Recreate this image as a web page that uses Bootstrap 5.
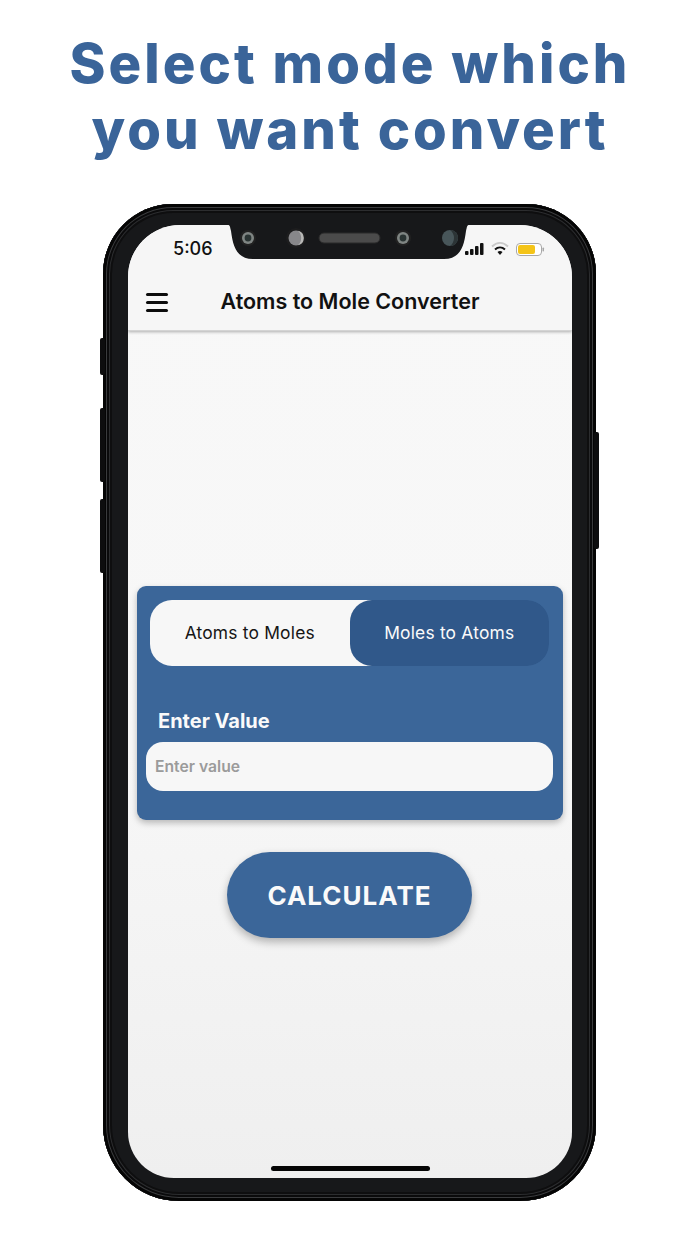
<!DOCTYPE html>
<html lang="en">
<head>
<meta charset="utf-8">
<title>Atoms to Mole Converter</title>
<link href="https://cdn.jsdelivr.net/npm/bootstrap@5.3.0/dist/css/bootstrap.min.css" rel="stylesheet">
<style>
html,body{margin:0;background:#fff;overflow:hidden}
body{width:700px;height:1244px;font-family:Inter,"Liberation Sans",sans-serif}
.promo-title{margin:0;padding-top:30px;height:204px;font-family:Inter,"Liberation Sans",sans-serif;font-weight:800;font-size:54.500px;line-height:66px;letter-spacing:3px;color:#3a6499;text-align:center}
.phone{position:relative;width:493px;height:997px;margin-left:103px;padding:21px 24px 23px 25px;border-radius:70px 70px 76px 76px;background:#17181a;box-shadow:inset 0 0 0 3px #050505,inset 0 0 0 4px #3a3b3d,inset 0 0 0 6px #0a0a0b,inset 0 0 0 7px #2c2d2f,inset 0 0 0 9px #0e0e0f}
.side-key{position:absolute;width:5px;background:#0d0d0e;border-radius:2px}
.k1{left:-3px;top:134px;height:37px}.k2{left:-3px;top:204px;height:74px}.k3{left:-3px;top:295px;height:74px}.k4{right:-3px;top:228px;height:117px}
.screen{position:relative;width:444px;height:953px;border-radius:52px 52px 46px 46px;overflow:hidden;background:linear-gradient(180deg,#f8f8f8 0%,#f7f7f7 55%,#efefef 100%)}
.notch-art{position:absolute;left:95px;top:0}
.clock{position:absolute;left:45px;top:13px;font-size:18px;line-height:22px;font-weight:500;color:#111}
.status-art{position:absolute;left:334px;top:15px}
.app-bar{height:106px;padding-top:61px;background:#f6f6f6;box-shadow:0 1px 3px rgba(0,0,0,.3);border-bottom:1px solid #d4d4d4}
.burger{position:absolute;left:18px;top:68px;width:22px;display:flex;flex-direction:column;gap:5px}
.burger i{display:block;height:3px;border-radius:2px;background:#0c0c0c}
.app-title{margin:0;font-size:21.500px;line-height:30px;font-weight:600;color:#111;text-align:center}
.panel{margin:255px 9px 0;height:234px;padding:14px 13px;border:0;border-radius:9px;background:#3b6699;box-shadow:0 3px 6px rgba(0,0,0,.25)}
.mode-switch{width:399px;height:66px;border-radius:22px;background:linear-gradient(90deg,#f7f7f7 60%,transparent 60%);overflow:hidden}
.mode-switch .btn{width:50%;border:0;border-radius:22px;font-size:17.400px;font-weight:400;color:#151515;padding:0;height:66px;letter-spacing:.2px}
.mode-switch .btn.is-on{background:#30588a;color:#fafafa}
.field-label{margin:41px 0 7px 8px;font-size:20px;line-height:28px;font-weight:700;color:#fafafa;display:block}
.value-input{display:block;margin-left:-4px;width:407px;height:49px;border:0;border-radius:17px;background:#f7f7f7;padding:0 9px 1px;font-size:15.700px;font-weight:600;font-family:Inter,"Liberation Sans",sans-serif}
.value-input::placeholder{color:#9b9b9b;opacity:1}
.calc-btn{display:block;width:245px;height:86px;margin:32px auto 0 99px;border:0;border-radius:43px;background:#3b6699;color:#fafafa;font-size:26px;font-weight:700;letter-spacing:1px;box-shadow:0 4px 8px rgba(0,0,0,.28)}
.calc-btn:hover{background:#3b6699;color:#fafafa}
.home-bar{position:absolute;left:143px;bottom:7px;width:159px;height:5px;border-radius:3px;background:#050505}
</style>
</head>
<body>
<h1 class="promo-title">Select mode which<br>you want convert</h1>
<div class="phone">
  <span class="side-key k1"></span><span class="side-key k2"></span><span class="side-key k3"></span><span class="side-key k4"></span>
  <div class="screen">
    <div class="app-bar">
      <p class="app-title">Atoms to Mole Converter</p>
    </div>
    <div class="burger"><i></i><i></i><i></i></div>
    <svg class="notch-art" width="254" height="36" viewBox="0 0 254 36">
      <path d="M5 0C7 0 7 2 8 6C10 22 14 34 30 34H221C237 34 241 22 243 6C244 2 244 0 246 0Z" fill="#17181a"/>
      <circle cx="25" cy="13" r="8" fill="#222"/><circle cx="25" cy="13" r="6" fill="#7f8583"/><circle cx="25" cy="13" r="3.400" fill="#2a3433"/>
      <circle cx="73" cy="13" r="10" fill="#1d1d1e"/><circle cx="73" cy="13" r="7.500" fill="#87878a"/><path d="M75 5.700A7.500 7.500 0 0 1 75 20.300A10 10 0 0 0 75 5.700Z" fill="#b8b8b6"/>
      <rect x="96" y="8" width="61" height="10" rx="5" fill="#4b4b4b" stroke="#2b2b2b"/>
      <circle cx="180" cy="13" r="8" fill="#222"/><circle cx="180" cy="13" r="6" fill="#7f8583"/><circle cx="180" cy="13" r="3.400" fill="#2a3433"/>
      <circle cx="227" cy="13" r="8" fill="#48565a"/><path d="M227 5A8 8 0 0 1 227 21A10 10 0 0 0 227 5Z" fill="#2c3436"/>
    </svg>
    <div class="clock">5:06</div>
    <svg class="status-art" width="90" height="20" viewBox="0 0 90 20">
      <rect x="3" y="11" width="3.500" height="4" rx="1" fill="#111"/><rect x="8" y="9" width="3.500" height="6" rx="1" fill="#111"/><rect x="13" y="6" width="3.500" height="9" rx="1" fill="#111"/><rect x="18" y="3" width="3.500" height="12" rx="1" fill="#111"/>
      <path d="M30 6.500C35 1.800 41 1.800 46 6.500" fill="none" stroke="#c9c9c9" stroke-width="2"/>
      <path d="M33 9.500C36 6.800 40 6.800 43 9.500" fill="none" stroke="#111" stroke-width="2"/>
      <path d="M35.500 12C37 10.800 39 10.800 40.500 12L38 15Z" fill="#111"/>
      <rect x="54.500" y="3.500" width="25" height="12" rx="3.500" fill="#fff" stroke="#a8a8a8"/>
      <rect x="56" y="5" width="17" height="9" rx="2" fill="#f4c418"/>
      <rect x="80.500" y="7.500" width="1.500" height="4" rx=".7" fill="#a8a8a8"/>
    </svg>
    <div class="card panel">
      <div class="d-flex mode-switch">
        <button type="button" class="btn">Atoms to Moles</button>
        <button type="button" class="btn is-on">Moles to Atoms</button>
      </div>
      <label class="field-label" for="val">Enter Value</label>
      <input id="val" class="value-input" type="text" placeholder="Enter value">
    </div>
    <button type="button" class="btn calc-btn">CALCULATE</button>
    <div class="home-bar"></div>
  </div>
</div>
<script src="https://cdn.jsdelivr.net/npm/bootstrap@5.3.0/dist/js/bootstrap.bundle.min.js"></script>
</body>
</html>
